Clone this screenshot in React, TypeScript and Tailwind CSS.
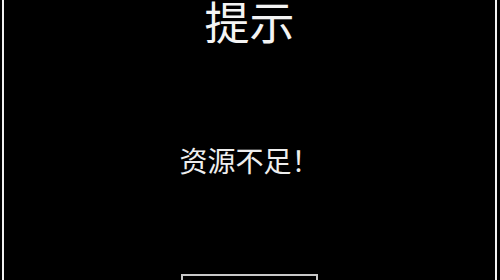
export default function App() {
  return (
    <div className="w-[500px] h-[280px] bg-black overflow-hidden" style={{ fontFamily: '"Noto Sans CJK SC", "Noto Sans", sans-serif' }}>
      <div className="ml-[2px] w-[495px] h-full border-x-2 border-[#f2f2f2] flex flex-col items-center">
        <div className="text-[45px] leading-[41px] text-[#f4f4f4]">提示</div>
        <div className="mt-[105px] text-[28px] leading-none text-[#eeeeee]">资源不足！</div>
        <div className="mt-[100px] w-[137px] h-[40px] shrink-0 border-2 border-[#c8c8c8]"></div>
      </div>
    </div>
  );
}
